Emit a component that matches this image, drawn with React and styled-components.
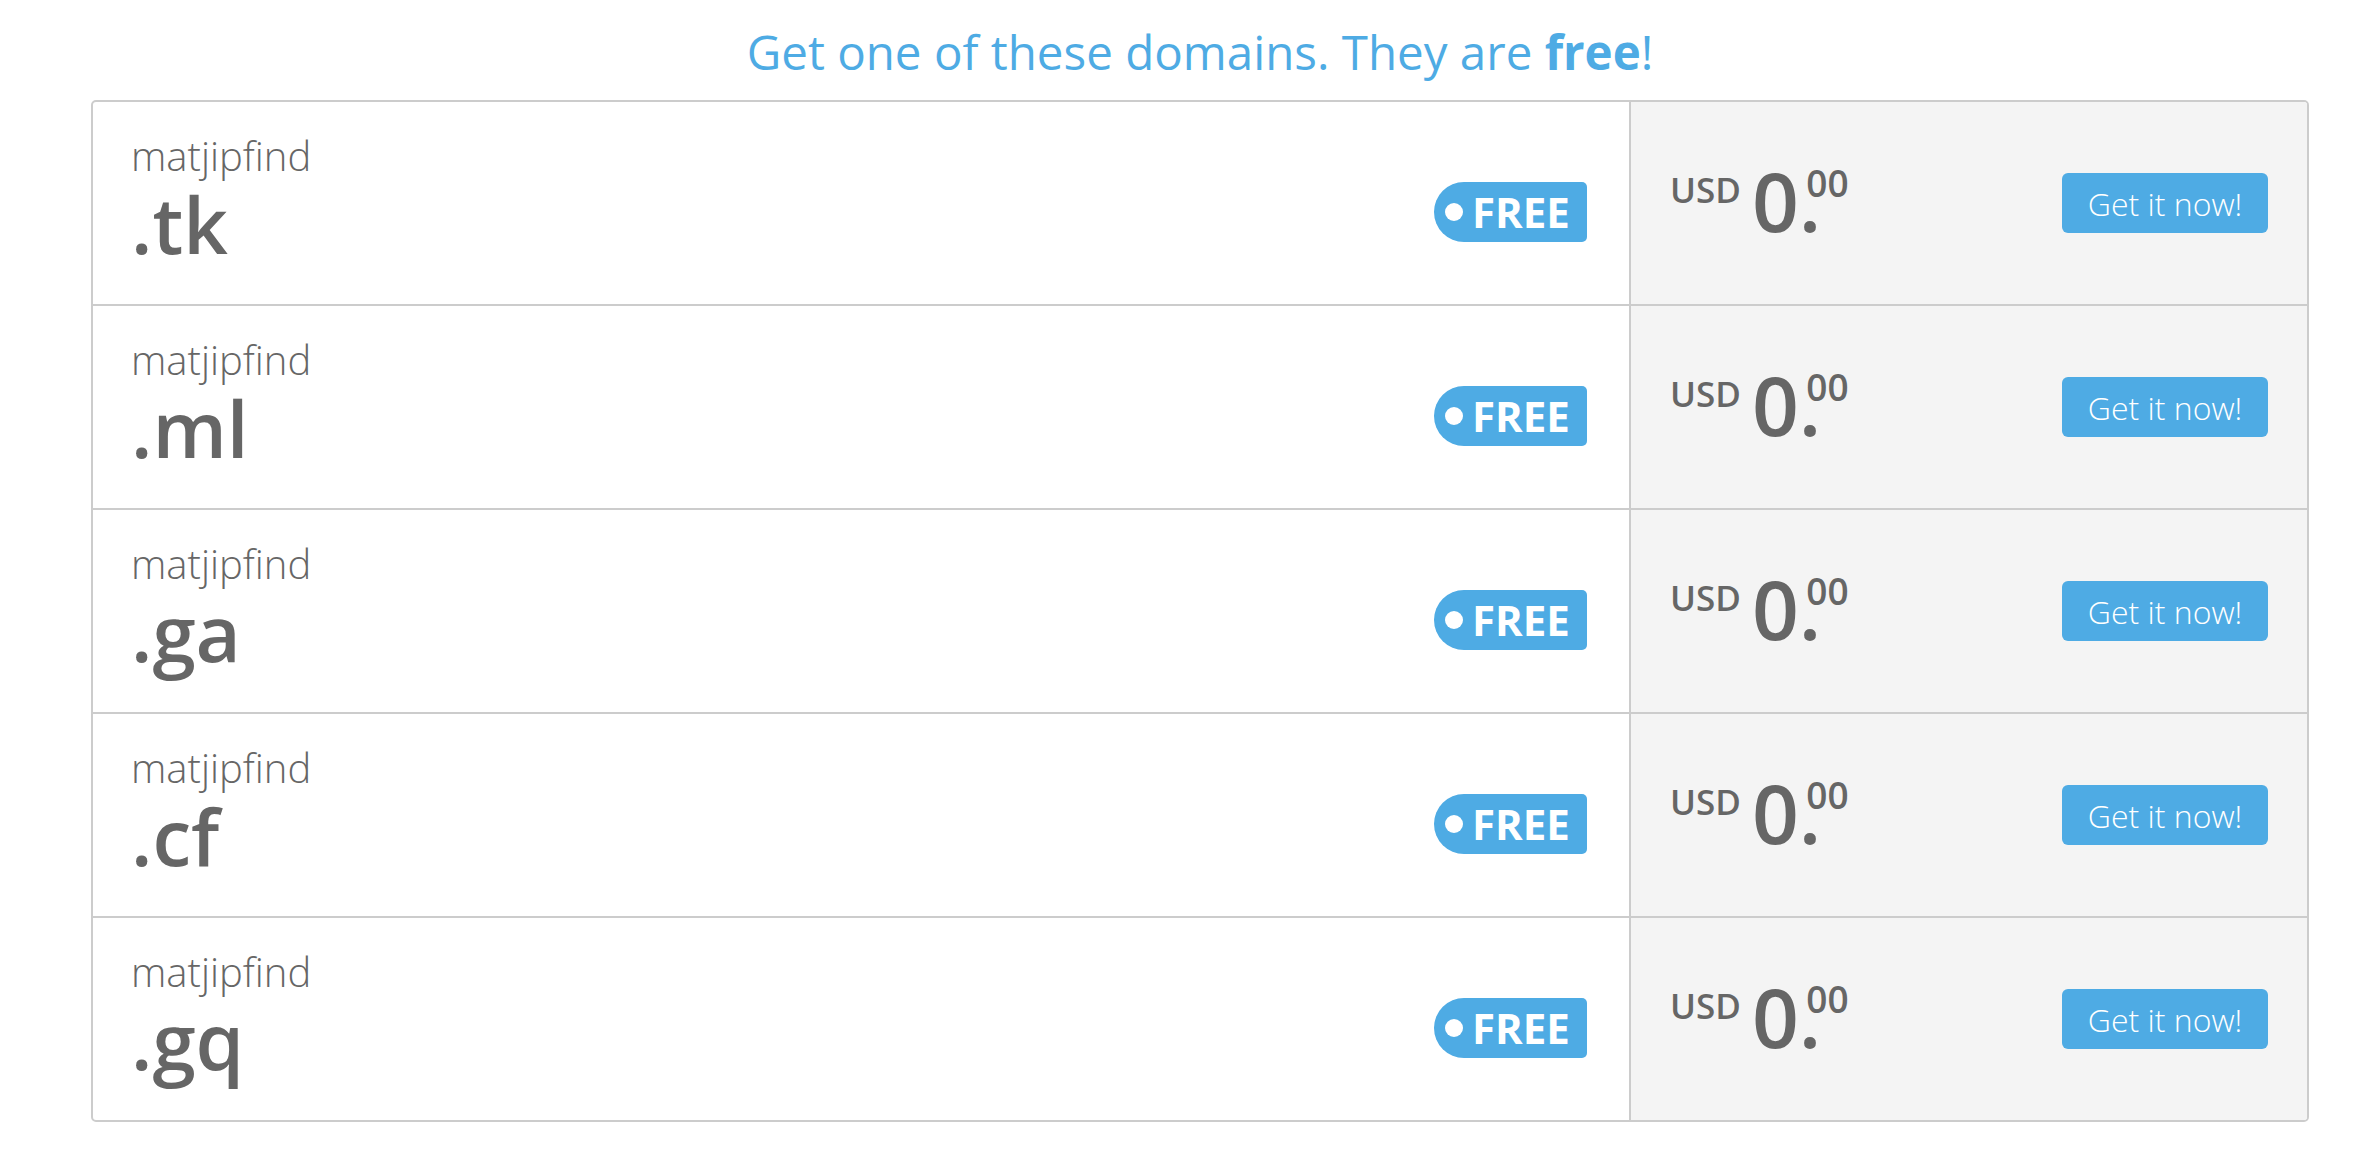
import React from "react";
import styled, { createGlobalStyle } from "styled-components";

const GlobalStyle = createGlobalStyle`
  body {
    margin: 0;
    background: #fff;
    font-family: "Open Sans", "Liberation Sans", sans-serif;
  }
`;

const Wrapper = styled.div`
  width: 2218px;
  margin-left: 91px;
`;

const Title = styled.h1`
  margin: 0 0 19px;
  padding-top: 23px;
  font-size: 47.5px;
  line-height: 58px;
  font-weight: 400;
  color: #4eabe4;
  text-align: center;
  b {
    font-weight: 700;
  }
`;

const Table = styled.div`
  border: 2px solid #cccccc;
  border-radius: 5px;
  overflow: hidden;
`;

const Row = styled.div`
  display: grid;
  grid-template-columns: 1536px 1fr;
  height: 202px;
  &:not(:last-child) {
    border-bottom: 2px solid #cccccc;
  }
`;

const DomainCell = styled.div`
  display: flex;
  justify-content: space-between;
  align-items: flex-start;
  padding: 30px 42px 0 38px;
`;

const Name = styled.div`
  color: #666666;
`;

const Sld = styled.div`
  font-size: 40px;
  line-height: 48px;
  font-weight: 300;
`;

const Tld = styled.div`
  margin-top: 5px;
  font-size: 78px;
  line-height: 78px;
  font-weight: 600;
`;

const Badge = styled.div`
  display: flex;
  align-items: center;
  margin-top: 50px;
  width: 153px;
  height: 60px;
  box-sizing: border-box;
  padding-left: 11px;
  border-radius: 30px 5px 5px 30px;
  background: #4eabe4;
  color: #fff;
  font-size: 42px;
  line-height: 1;
  font-weight: 700;
`;

const Dot = styled.span`
  width: 18px;
  height: 18px;
  border-radius: 50%;
  background: #fff;
  margin-right: 9px;
  flex-shrink: 0;
`;

const PriceCell = styled.div`
  display: flex;
  justify-content: space-between;
  align-items: center;
  padding: 0 39px;
  background: #f4f4f4;
  border-left: 2px solid #cccccc;
`;

const Price = styled.div`
  color: #666666;
  font-weight: 600;
  font-size: 82px;
  line-height: 82px;
  margin-bottom: 6px;
  white-space: nowrap;
`;

const Currency = styled.span`
  font-size: 35px;
  line-height: 1;
  vertical-align: 29px;
  margin-right: 11px;
`;

const Cents = styled.span`
  font-size: 37px;
  line-height: 1;
  vertical-align: 35px;
  margin-left: -15px;
`;

const GetButton = styled.button`
  width: 206px;
  height: 60px;
  border: none;
  border-radius: 6px;
  background: #4eabe4;
  color: #fff;
  font-family: "Open Sans", "Liberation Sans", sans-serif;
  font-size: 32px;
  font-weight: 300;
  cursor: pointer;
  padding: 0;
`;

const tlds = ["tk", "ml", "ga", "cf", "gq"];

export default function App() {
  return (
    <Wrapper>
      <GlobalStyle />
      <Title>
        Get one of these domains. They are <b>free</b>!
      </Title>
      <Table>
        {tlds.map((tld) => (
          <Row key={tld}>
            <DomainCell>
              <Name>
                <Sld>matjipfind</Sld>
                <Tld>.{tld}</Tld>
              </Name>
              <Badge>
                <Dot />
                FREE
              </Badge>
            </DomainCell>
            <PriceCell>
              <Price>
                <Currency>USD</Currency>0.<Cents>00</Cents>
              </Price>
              <GetButton>Get it now!</GetButton>
            </PriceCell>
          </Row>
        ))}
      </Table>
    </Wrapper>
  );
}
